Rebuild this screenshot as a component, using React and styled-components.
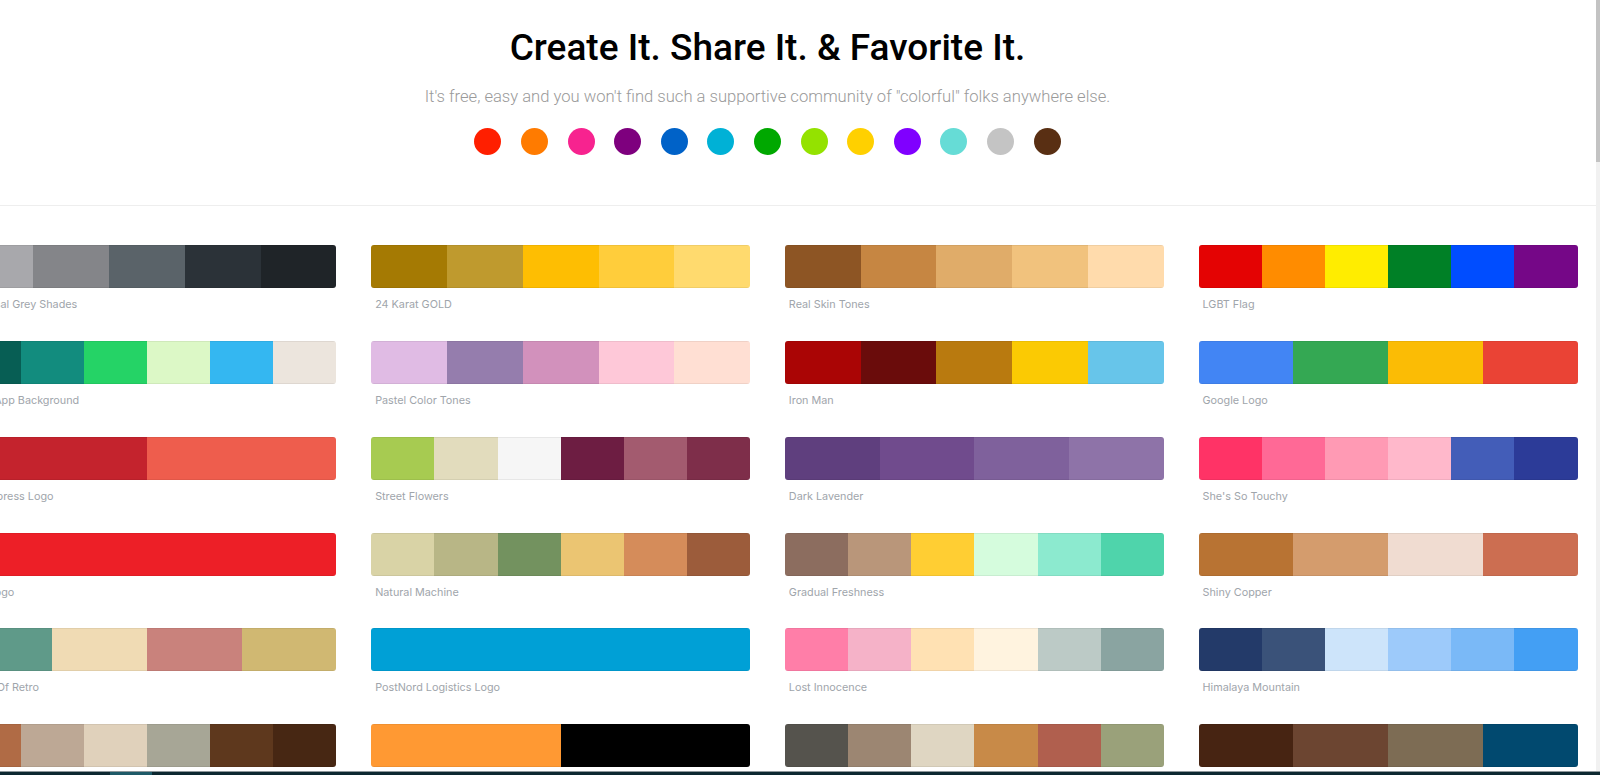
import React from "react";
import styled, { createGlobalStyle } from "styled-components";

const GlobalStyle = createGlobalStyle`
  html, body {
    margin: 0;
    padding: 0;
    background: #ffffff;
    overflow: hidden;
  }
`;

const dots = [
  "#ff1f00",
  "#ff7b00",
  "#f7238f",
  "#7e007e",
  "#0062c8",
  "#00b1d6",
  "#00a800",
  "#94e200",
  "#ffd000",
  "#8000ff",
  "#66dcd6",
  "#c4c4c4",
  "#592f13",
];

const palettes = [
  { name: "Universal Grey Shades", colors: ["#a8a8ac", "#848589", "#5a6369", "#2b3238", "#1f2428"] },
  { name: "24 Karat GOLD", colors: ["#a57a03", "#bf9a2e", "#febe02", "#ffcd3b", "#ffda6e"] },
  { name: "Real Skin Tones", colors: ["#8d5524", "#c68642", "#e0ac69", "#f1c27d", "#ffdbac"] },
  { name: "LGBT Flag", colors: ["#e40303", "#ff8c00", "#ffed00", "#008026", "#004dff", "#750787"] },

  { name: "Photo App Background", colors: ["#075e54", "#128c7e", "#25d366", "#dcf8c6", "#34b7f1", "#ece5dd"] },
  { name: "Pastel Color Tones", colors: ["#e0bbe4", "#957dad", "#d291bc", "#fec8d8", "#ffdfd3"] },
  { name: "Iron Man", colors: ["#aa0505", "#6a0c0b", "#b97a0f", "#fbca03", "#67c5ea"] },
  { name: "Google Logo", colors: ["#4285f4", "#34a853", "#fbbc05", "#ea4335"] },

  { name: "Red Express Logo", colors: ["#c4232d", "#ee5d4d"] },
  { name: "Street Flowers", colors: ["#a7cb51", "#e2dcbd", "#f6f6f6", "#6d1d42", "#a35b6f", "#7e2e4a"] },
  { name: "Dark Lavender", colors: ["#5f3f7e", "#704b8d", "#7f619c", "#8e73a8"] },
  { name: "She's So Touchy", colors: ["#ff3366", "#ff6996", "#ff9ab4", "#ffb8cb", "#435db8", "#2c3b98"] },

  { name: "CNN Logo", colors: ["#ed1f27"] },
  { name: "Natural Machine", colors: ["#d9d3a6", "#b8b686", "#73925f", "#ebc572", "#d58c5a", "#9c5c3b"] },
  { name: "Gradual Freshness", colors: ["#8c6d5f", "#b9967a", "#ffce33", "#d5fcdd", "#8ceacf", "#4fd4ab"] },
  { name: "Shiny Copper", colors: ["#b87333", "#d49c6d", "#f0dcd1", "#cc6e51"] },

  { name: "Punch Of Retro", colors: ["#5f9a89", "#f0dbb4", "#c9827c", "#d0b872"] },
  { name: "PostNord Logistics Logo", colors: ["#00a0d6"] },
  { name: "Lost Innocence", colors: ["#ff7ea8", "#f5b2c8", "#ffe1b3", "#fff3df", "#bccac6", "#8aa4a1"] },
  { name: "Himalaya Mountain", colors: ["#233a69", "#3a5279", "#cde4fa", "#9dcafa", "#7ab9f7", "#439ff4"] },

  { name: "Autumn Leaves", colors: ["#b06b45", "#bda895", "#e0d1bb", "#a7a696", "#5e381d", "#472713"] },
  { name: "Orange Night", colors: ["#ff9933", "#000000"] },
  { name: "Earthy Kitchen", colors: ["#55534d", "#9c8672", "#dfd6c2", "#c88a48", "#b05f4e", "#9aa17a"] },
  { name: "Coffee And Sea", colors: ["#472412", "#6c4531", "#7d6c54", "#01496f"] },
];

export default function App() {
  return (
    <>
      <GlobalStyle />
      <Screen>
        <Viewport>
          <Page>
            <Container>
              <Header>
                <Title>Create It. Share It. &amp; Favorite It.</Title>
                <Subtitle>
                  It's free, easy and you won't find such a supportive community of
                  "colorful" folks anywhere else.
                </Subtitle>
                <DotRow>
                  {dots.map((c) => (
                    <Dot key={c} color={c} />
                  ))}
                </DotRow>
              </Header>
            </Container>
            <Divider />
            <Container>
              <PaletteGrid>
                {palettes.map((p) => (
                  <Card key={p.name}>
                    <Bar>
                      {p.colors.map((c, i) => (
                        <Swatch key={i} color={c} />
                      ))}
                    </Bar>
                    <Label>{p.name}</Label>
                  </Card>
                ))}
              </PaletteGrid>
            </Container>
          </Page>
          <ScrollTrack>
            <ScrollThumb />
          </ScrollTrack>
        </Viewport>
        <Taskbar>
          <TaskItem />
        </Taskbar>
      </Screen>
    </>
  );
}

const Screen = styled.div`
  height: 100vh;
  display: flex;
  flex-direction: column;
  overflow: hidden;
`;

const Viewport = styled.div`
  flex: 1;
  min-height: 0;
  display: flex;
`;

const Page = styled.main`
  flex: 1;
  min-width: 0;
  overflow: hidden;
`;

const Container = styled.div`
  width: 1535px;
`;

const Header = styled.header`
  display: flex;
  flex-direction: column;
  align-items: center;
  padding: 26px 0 50px;
`;

const Title = styled.h1`
  margin: 0;
  font-family: Roboto, "Liberation Sans", sans-serif;
  font-weight: 500;
  font-size: 37px;
  line-height: 1.2;
  color: #000000;
`;

const Subtitle = styled.p`
  margin: 15px 0 0;
  font-family: Roboto, "Liberation Sans", sans-serif;
  font-weight: 300;
  font-size: 16.6px;
  line-height: 1.5;
  color: #9a9a9a;
`;

const DotRow = styled.div`
  display: flex;
  gap: 19.6px;
  margin-top: 18px;
`;

const Dot = styled.span`
  width: 27px;
  height: 27px;
  border-radius: 50%;
  background: ${({ color }) => color};
`;

const Divider = styled.hr`
  margin: 0;
  border: 0;
  border-top: 1px solid #eeeeee;
`;

const PaletteGrid = styled.section`
  display: grid;
  grid-template-columns: repeat(4, 379px);
  justify-content: center;
  column-gap: 34.7px;
  row-gap: 27.8px;
  padding-top: 39px;
`;

const Card = styled.div`
  display: flex;
  flex-direction: column;
`;

const Bar = styled.div`
  display: flex;
  height: 43px;
  border-radius: 3px;
  overflow: hidden;
`;

const Swatch = styled.div`
  flex: 1;
  background: ${({ color }) => color};
  box-shadow: inset 0 1px 0 rgba(0, 0, 0, 0.06), inset 0 -1px 0 rgba(0, 0, 0, 0.06);
`;

const Label = styled.span`
  margin-top: 9px;
  padding-left: 4px;
  font-family: Inter, "Liberation Sans", sans-serif;
  font-size: 10.8px;
  line-height: 16px;
  color: #a0a5ab;
  white-space: nowrap;
`;

const ScrollTrack = styled.div`
  width: 4px;
  background: #f1f1f1;
`;

const ScrollThumb = styled.div`
  height: 162px;
  background: #c3c3c3;
`;

const Taskbar = styled.footer`
  height: 3px;
  display: flex;
  border-top: 1px solid #8e979b;
  background: #0d2830;
`;

const TaskItem = styled.span`
  width: 42px;
  margin-left: 110px;
  background: #1f5a68;
`;
